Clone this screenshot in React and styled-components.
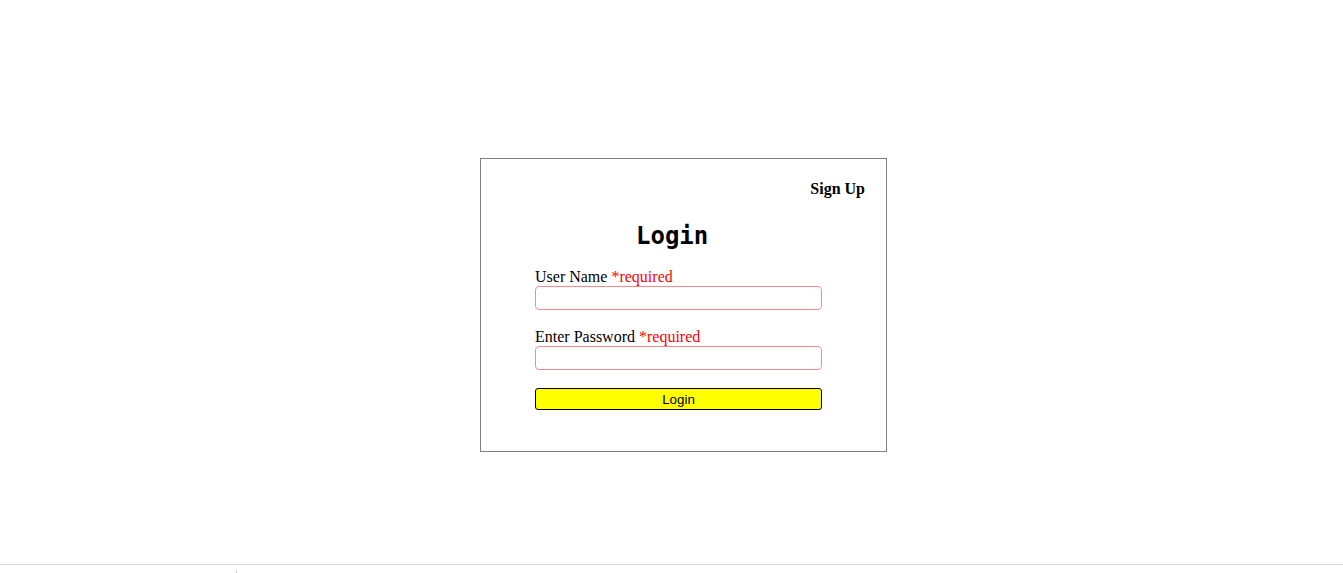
import styled, { createGlobalStyle } from "styled-components";

const GlobalStyle = createGlobalStyle`
  html, body {
    margin: 0;
    padding: 0;
    background: #fff;
  }
  body {
    font-family: "Liberation Serif", "Times New Roman", serif;
    font-size: 16px;
    color: #000;
  }
`;

const Page = styled.div`
  min-height: 100vh;
  display: flex;
  flex-direction: column;
  box-sizing: border-box;
`;

const Main = styled.main`
  flex: 1;
  display: flex;
  justify-content: center;
  align-items: flex-start;
  padding: 158px 0 0 24px;
`;

const Card = styled.div`
  width: 405px;
  border: 1px solid #808080;
  padding: 21px 0 41px;
  display: flex;
  flex-direction: column;
`;

const TopBar = styled.div`
  display: flex;
  justify-content: flex-end;
  padding-right: 21px;
`;

const SignUp = styled.a`
  font-weight: bold;
  color: #000;
  text-decoration: none;
  cursor: pointer;
  line-height: 18px;
`;

const Title = styled.h2`
  margin: 24px 0 17px 155px;
  font-family: "DejaVu Sans Mono", "Liberation Mono", monospace;
  font-weight: bold;
  font-size: 24px;
  line-height: 28px;
`;

const Form = styled.form`
  display: flex;
  flex-direction: column;
  width: 287px;
  margin-left: 54px;
`;

const Field = styled.div`
  display: flex;
  flex-direction: column;
  margin-bottom: ${(p) => p.$gap}px;
`;

const Label = styled.label`
  line-height: 19px;
`;

const Required = styled.span`
  color: red;
`;

const Input = styled.input`
  box-sizing: border-box;
  height: 24px;
  width: 100%;
  border: 1px solid #f48c8c;
  border-radius: 4px;
  outline: none;
  padding: 0 4px;
`;

const Button = styled.button`
  box-sizing: border-box;
  height: 22px;
  width: 100%;
  background: #ffff00;
  border: 1px solid #000;
  border-radius: 3px;
  font-family: "Liberation Sans", Arial, sans-serif;
  font-size: 13.33px;
  color: #000;
  padding: 0;
  cursor: pointer;
`;

const Footer = styled.footer`
  height: 8px;
  border-top: 1px solid #dcdcdc;
  display: flex;
  align-items: flex-end;
  padding-left: 236px;
`;

const Tick = styled.span`
  width: 1px;
  height: 3px;
  background: #cfcfcf;
`;

export default function App() {
  return (
    <>
      <GlobalStyle />
      <Page>
        <Main>
          <Card>
            <TopBar>
              <SignUp>Sign Up</SignUp>
            </TopBar>
            <Title>Login</Title>
            <Form onSubmit={(e) => e.preventDefault()}>
              <Field $gap={17}>
                <Label>
                  User Name <Required>*required</Required>
                </Label>
                <Input type="text" />
              </Field>
              <Field $gap={18}>
                <Label>
                  Enter Password <Required>*required</Required>
                </Label>
                <Input type="password" />
              </Field>
              <Button type="submit">Login</Button>
            </Form>
          </Card>
        </Main>
        <Footer>
          <Tick />
        </Footer>
      </Page>
    </>
  );
}
